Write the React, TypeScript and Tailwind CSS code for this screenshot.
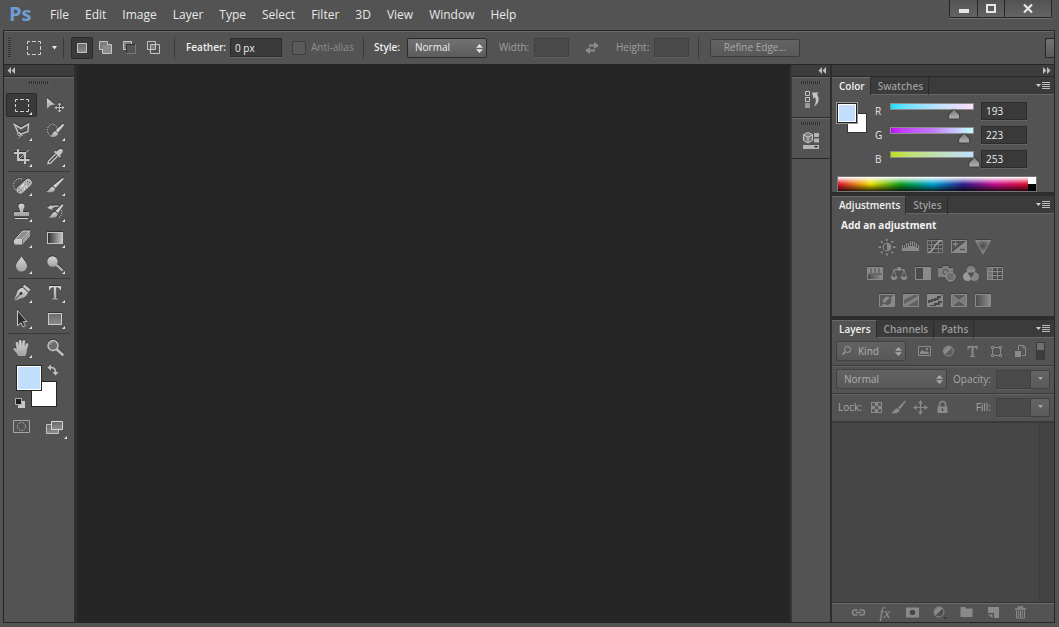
import { ReactNode, useState } from "react";
import clsx from "clsx";

const LIGHT = "#c4c4c4";

interface GlyphProps {
  w?: number;
  h?: number;
  className?: string;
  children: ReactNode;
}

function Glyph({ w = 20, h = 20, className, children }: GlyphProps) {
  return (
    <svg
      width={w}
      height={h}
      viewBox={`0 0 ${w} ${h}`}
      fill="none"
      aria-hidden="true"
      className={clsx("shrink-0", className)}
    >
      {children}
    </svg>
  );
}

// shared gradients, referenced by id from every icon
function Gradients() {
  return (
    <svg width="0" height="0" className="absolute" aria-hidden="true">
      <defs>
        <linearGradient id="metal" x1="0" y1="0" x2="0" y2="1">
          <stop offset="0" stopColor="#d6d6d6" />
          <stop offset="1" stopColor="#a2a2a2" />
        </linearGradient>
        <linearGradient id="dim" x1="0" y1="0" x2="0" y2="1">
          <stop offset="0" stopColor="#747474" />
          <stop offset="1" stopColor="#9a9a9a" />
        </linearGradient>
        <linearGradient id="box" x1="0" y1="0" x2="0" y2="1">
          <stop offset="0" stopColor="#6a6a6a" />
          <stop offset="1" stopColor="#8c8c8c" />
        </linearGradient>
        <linearGradient id="ramp" x1="0" y1="0" x2="1" y2="0">
          <stop offset="0" stopColor="#2c2c2c" />
          <stop offset="1" stopColor="#c8c8c8" />
        </linearGradient>
        <linearGradient id="dimRamp" x1="0" y1="0" x2="1" y2="0">
          <stop offset="0" stopColor="#4a4a4a" />
          <stop offset="1" stopColor="#8f8f8f" />
        </linearGradient>
        <radialGradient id="vibrance" cx=".5" cy=".4" r=".5">
          <stop offset="0" stopColor="#4c4c4c" />
          <stop offset="1" stopColor="#848484" />
        </radialGradient>
      </defs>
    </svg>
  );
}

interface Tool {
  name: string;
  flyout?: boolean;
  icon: ReactNode;
}

const toolGroups: Tool[][] = [
  [
    {
      name: "Rectangular Marquee",
      flyout: true,
      icon: <path d="M3.5 7V4.5H6M8 4.5h4M14 4.5h2.5V7M16.5 9v3M16.5 14v2.500H14M12 16.5H8M6 16.5H3.5V14M3.5 12V9" stroke="#d2d2d2" />,
    },
    {
      name: "Move",
      icon: (
        <>
          <path d="M2 3l8 6.5-4.500.7L2 14z" fill="url(#metal)" />
          <path d="M14.5 8v9M10 12.500h9" stroke={LIGHT} />
          <path d="M14.5 7.500l2 2.300h-4zM14.5 17.500l2-2.300h-4zM9.5 12.500l2.300-2v4zM19.5 12.500l-2.300-2v4z" fill={LIGHT} />
        </>
      ),
    },
    {
      name: "Polygonal Lasso",
      flyout: true,
      icon: (
        <>
          <path d="M2.5 3.500L9 7.500l7.500-4.500-.5 7.500-7 2.500-3-1.500z" stroke={LIGHT} strokeWidth="1.500" />
          <path d="M9 13c-1.500-1.500-4-1-3.500.5s3 1 3.500-.5c0 1.500-.5 3-2.500 4M9 13l1.500 2" stroke={LIGHT} />
        </>
      ),
    },
    {
      name: "Quick Selection",
      flyout: true,
      icon: (
        <>
          <ellipse cx="7.500" cy="9" rx="5" ry="6" stroke="#dcdcdc" strokeDasharray="1.200 1.200" />
          <path d="M19.500 3.500L13 11.500l-2.500-2L17.500 3z" fill="#d0d0d0" />
          <path d="M10 10l3 2.500c-.5 3-4 4-8 3 2-.7 2.500-4.500 5-5.500z" fill="url(#metal)" />
        </>
      ),
    },
    {
      name: "Crop",
      flyout: true,
      icon: (
        <>
          <path d="M6 2v11h11.500M2 6h11v11" stroke={LIGHT} strokeWidth="2" />
          <path d="M6.500 12.500L17 2.500" stroke={LIGHT} />
        </>
      ),
    },
    {
      name: "Eyedropper",
      flyout: true,
      icon: (
        <>
          <path d="M12 4.500c1.500-2 3-3 4.500-2.500s2 2 .5 4l-2 2 1 1-1.500 1.500-5.500-5.500L10.500 3.500z" fill={LIGHT} />
          <path d="M10.500 7l-7 7-.5 2.500 2.500-.5 7-7" stroke={LIGHT} strokeWidth="1.400" />
        </>
      ),
    },
  ],
  [
    {
      name: "Spot Healing Brush",
      flyout: true,
      icon: (
        <>
          <path d="M10 3C5 1 1 6 1.500 9.500S4 15 6 15.500" stroke="#dcdcdc" strokeDasharray="1.200 1.200" />
          <rect x="3" y="6.500" width="18" height="7.500" rx="3.500" transform="rotate(-43 12 10)" fill="#b4b4b4" />
          <path d="M8.800 10.500l3-3L15.500 11l-3 3z" fill="#dedede" />
          <path d="M11.500 10.500h1M10.500 12h1M13 12h1M12.500 9h1M15 5.500h1M17 6.500h1M15.500 8h1M6.500 13h1M8.500 14.500h1M6.500 15.500h1" stroke="#555" />
        </>
      ),
    },
    {
      name: "Brush",
      flyout: true,
      icon: (
        <>
          <path d="M19 2.500L10.500 12 8 9.800 17.500 2z" fill="#d0d0d0" />
          <path d="M7.500 10.500l2.700 2.200c-.5 3.300-4 4.300-9 3 2.500-.7 3-4.200 6.300-5.200z" fill="url(#metal)" />
        </>
      ),
    },
    {
      name: "Clone Stamp",
      flyout: true,
      icon: (
        <>
          <path d="M9.500 1.500c2 0 3.200 1.300 3 3-.2 1.500-1.500 2.200-1.500 5.500h6v4H2v-4h6c0-3.300-1.300-4-1.500-5.500-.2-1.700 1-3 3-3z" fill="url(#metal)" />
          <path d="M3 16.500h13" stroke="#d6d6d6" />
        </>
      ),
    },
    {
      name: "History Brush",
      flyout: true,
      icon: (
        <>
          <path d="M2 6l4.500-3.500V4C9 3 11 3 13.500 3.500v1.500C11 4.500 9 5 7 6.500L8 8z" fill={LIGHT} />
          <path d="M18.500 3L13 11l-2.500-2L17 2.300z" fill="#d0d0d0" />
          <path d="M10 9.800l2.500 2c0 3.200-3.500 4.700-9 3.500 2.500-.7 3-4.500 6.500-5.500z" fill="url(#metal)" />
          <path d="M16.500 8c1 3 0 6.500-3.500 8" stroke="#dcdcdc" strokeDasharray="1.200 1.200" />
        </>
      ),
    },
    {
      name: "Eraser",
      flyout: true,
      icon: (
        <>
          <path d="M10.500 3h7.500L10 11.500H3z" fill="#8e8e8e" stroke="#d2d2d2" />
          <path d="M2 12h8v4.500H3.500C2 16.500 2 15 2 12z" fill="#c6c6c6" />
          <path d="M10.500 12L18 3.500v4.500L10.500 16.500z" fill="#a2a2a2" />
        </>
      ),
    },
    {
      name: "Gradient",
      flyout: true,
      icon: <rect x="2.500" y="4.500" width="15" height="11" fill="url(#ramp)" stroke={LIGHT} />,
    },
    {
      name: "Blur",
      flyout: true,
      icon: <path d="M9.500 2c1 3 5.500 6 5.500 10a5.500 5.500 0 01-11 0c0-4 4.500-7 5.500-10z" fill="url(#metal)" />,
    },
    {
      name: "Dodge",
      flyout: true,
      icon: (
        <>
          <path d="M11 10.500l6 5.500" stroke="#b8b8b8" strokeWidth="2.200" strokeLinecap="round" />
          <circle cx="7.500" cy="7.500" r="5.200" fill="url(#metal)" />
        </>
      ),
    },
  ],
  [
    {
      name: "Pen",
      flyout: true,
      icon: (
        <>
          <path d="M12.500 1.500l6 5-1.700 2.300-6-5z" fill={LIGHT} />
          <path d="M10.500 4.500l5.500 4.800c-1 3.700-3.500 5.700-7.500 6.200L3.500 17.500l-1.500-1.500L4.500 11C5 7.500 7 5.500 10.500 4.500z" fill="url(#metal)" />
          <path d="M3 16.500l5.500-5.500" stroke="#333" />
          <circle cx="9" cy="10.500" r="1.400" fill="#333" />
        </>
      ),
    },
    {
      name: "Type",
      flyout: true,
      icon: <path d="M4 3h12v4h-1c-.3-1.800-1-2.700-3.800-2.700V14c0 1 .5 1.500 2 1.500v1H6.800v-1c1.500 0 2-.5 2-1.500V4.300C6 4.300 5.300 5.200 5 7H4z" fill="url(#metal)" />,
    },
    {
      name: "Path Selection",
      flyout: true,
      icon: <path d="M5.500 1.500l9.500 11-3.700.2 2.200 4-2.500 1.200-2-4.200-3.500 3z" fill="#2e2e2e" stroke="#c8c8c8" />,
    },
    {
      name: "Rectangle",
      flyout: true,
      icon: <rect x="3.500" y="4.500" width="13" height="11" fill="url(#box)" stroke="#cacaca" />,
    },
  ],
  [
    {
      name: "Hand",
      flyout: true,
      icon: (
        <path
          d="M6.500 17.500c-1-2.500-3.500-4.500-5-6.500.5-1.500 2-1 3.500 1L4 5c0-1.300 1.500-1.500 2 0l1 4.500L7.200 3c.2-1.400 1.800-1.400 2 0l.5 6 1.300-6c.4-1.300 2-1 1.900.5L12.300 10l2-4.200c.6-1.200 2-.6 1.700.7-.7 3-1.300 4-1.700 7-.2 1.700-.8 3-1.300 4z"
          fill="url(#metal)"
          stroke="#c8c8c8"
          strokeWidth=".6"
        />
      ),
    },
    {
      name: "Zoom",
      icon: (
        <>
          <path d="M11.500 11l6 5.500" stroke="#bdbdbd" strokeWidth="2.600" strokeLinecap="round" />
          <circle cx="8" cy="7.500" r="5" fill="#6c6c6c" stroke="#c4c4c4" strokeWidth="1.500" />
          <path d="M5 7a3.500 3.500 0 013.500-3" stroke="#a8a8a8" />
        </>
      ),
    },
  ],
];

function Grip() {
  return (
    <div className="h-[3px] w-5 bg-[repeating-linear-gradient(to_right,#2b2b2b_0_1px,#5c5c5c_1px_2px)]" />
  );
}

function Flyout() {
  return (
    <span className="absolute right-1 bottom-px size-[3px] bg-[#e4e4e4] [clip-path:polygon(100%_0,100%_100%,0_100%)]" />
  );
}

function DoubleArrow({ right = false }: { right?: boolean }) {
  return (
    <Glyph w={9} h={7}>
      <path d={right ? "M1 0v7l3.500-3.500zM5 0v7l3.500-3.500z" : "M4 0v7L.5 3.500zM8 0v7L4.500 3.500z"} fill="#bdbdbd" />
    </Glyph>
  );
}

function UpDown({ className }: { className?: string }) {
  return (
    <Glyph w={7} h={9} className={className}>
      <path d="M3.500 0L7 3.700H0zM3.500 9L7 5.300H0z" fill="currentColor" />
    </Glyph>
  );
}

function CollapseBar({ children }: { children: ReactNode }) {
  return (
    <div className="flex h-3 shrink-0 items-center border-b border-[#262626] bg-[#3d3d3d] px-[3px]">
      {children}
    </div>
  );
}

const menus = ["File", "Edit", "Image", "Layer", "Type", "Select", "Filter", "3D", "View", "Window", "Help"];

function TitleBar() {
  return (
    <header className="flex h-[30px] shrink-0 items-start">
      <div className="flex h-[28px] w-[42px] items-center pl-[9px] text-[20px] font-bold text-[#6f9dd3]">Ps</div>
      <nav className="flex h-[30px] items-center">
        {menus.map((menu) => (
          <button key={menu} type="button" className="px-2 text-xs text-[#e8e8e8]">
            {menu}
          </button>
        ))}
      </nav>
      <div className="mr-[7px] ml-auto flex h-[18px] rounded-b-xs border border-t-0 border-[#262626] bg-linear-to-b from-[#535353] to-[#646464] shadow-[0_1px_0_#707070]">
        <button type="button" aria-label="Minimize" className="flex w-[27px] items-center justify-center">
          <Glyph w={10} h={16}><path d="M0 8h10v4H0z" fill="#e6e6e6" /></Glyph>
        </button>
        <button type="button" aria-label="Maximize" className="flex w-[28px] items-center justify-center border-x border-[#262626]">
          <Glyph w={10} h={16}><path d="M1 4h8v7H1z" stroke="#e6e6e6" strokeWidth="2" /></Glyph>
        </button>
        <button type="button" aria-label="Close" className="flex w-[46px] items-center justify-center">
          <Glyph w={10} h={16}><path d="M1 3.500l8 8M9 3.500l-8 8" stroke="#e6e6e6" strokeWidth="2.200" /></Glyph>
        </button>
      </div>
    </header>
  );
}

function Divider() {
  return <div className="h-[22px] w-px shrink-0 bg-[#3a3a3a]" />;
}

const selectionModes = [
  {
    name: "Add to selection",
    icon: (
      <>
        <path d="M1.500 1.500h8v8h-8z" fill="#7d7d7d" stroke={LIGHT} />
        <path d="M5 5h8v8H5z" fill="#8c8c8c" />
        <path d="M9.500 4.500h4v9h-9v-4" stroke={LIGHT} />
      </>
    ),
  },
  {
    name: "Subtract from selection",
    icon: (
      <>
        <path d="M4.500 9.500h-3v-8h8v3" fill="#7d7d7d" stroke={LIGHT} />
        <path d="M4.500 4.500h9v9h-9z" fill="#555" stroke="#7a7a7a" />
        <path d="M4.500 13V4.500H13" stroke="#2e2e2e" />
      </>
    ),
  },
  {
    name: "Intersect with selection",
    icon: (
      <>
        <path d="M1.500 1.500h8v8h-8zM4.500 4.500h9v9h-9z" stroke={LIGHT} />
        <path d="M5 5h4v4H5z" fill="#7a7a7a" />
      </>
    ),
  },
];

const emptyField = "h-[19px] min-w-0 border border-[#414141] bg-[#4a4a4a] shadow-[0_1px_0_#5e5e5e]";

function OptionsBar() {
  const [feather, setFeather] = useState("0 px");

  return (
    <div className="flex h-[34px] shrink-0 items-center border-t border-b border-t-[#6a6a6a] border-b-[#262626] pb-px pl-1 text-[10px] text-[#a0a0a0]">
      <div className="h-5 w-[3px] bg-[repeating-linear-gradient(to_bottom,#2e2e2e_0_1px,#5c5c5c_1px_2px)]" />
      <button type="button" aria-label="Tool presets" className="ml-3 flex w-[40px] items-center justify-between pl-1">
        <Glyph w={14} h={14}>
          <path d="M.5 3V.5H3M5 .5h4M11 .5h2.500V3M13.500 5v4M13.500 11v2.500H11M9 13.500H5M3 13.500H.5V11M.5 9V5" stroke="#cfcfcf" />
        </Glyph>
        <Glyph w={7} h={4} className="mr-[5px]"><path d="M1 0h5L3.500 3.500z" fill="#e6e6e6" /></Glyph>
      </button>
      <Divider />
      <button type="button" aria-label="New selection" className="ml-[7px] flex h-[22px] w-[22px] items-center justify-center rounded-xs border border-[#2b2b2b] bg-[#3a3a3a]">
        <Glyph w={12} h={12}><path d="M1.500 1.500h9v9h-9z" fill="url(#box)" stroke={LIGHT} /></Glyph>
      </button>
      {selectionModes.map((mode) => (
        <button key={mode.name} type="button" aria-label={mode.name} className="flex w-6 justify-center">
          <Glyph w={15} h={15}>{mode.icon}</Glyph>
        </button>
      ))}
      <div className="ml-[9px]"><Divider /></div>
      <label htmlFor="feather" className="ml-[11px] w-[44px] font-semibold whitespace-nowrap text-[#eee]">Feather:</label>
      <input
        id="feather"
        value={feather}
        onChange={(e) => setFeather(e.target.value)}
        className="h-[19px] w-[52px] border border-[#2c2c2c] bg-[#3a3a3a] px-1 text-[#eee] shadow-[0_1px_0_#646464]"
      />
      <label className="ml-[10px] flex w-[71px] items-center gap-[5px] whitespace-nowrap text-[#8e8e8e]">
        <input type="checkbox" disabled className="size-[14px] shrink-0 appearance-none rounded-xs border border-[#3e3e3e] bg-[#5a5a5a]" />
        Anti-alias
      </label>
      <Divider />
      <label htmlFor="style" className="ml-[10px] w-[33px] font-semibold whitespace-nowrap text-[#eee]">Style:</label>
      <div className="relative">
        <select
          id="style"
          className="h-5 w-20 appearance-none rounded-xs border border-[#2b2b2b] bg-linear-to-b from-[#727272] to-[#5c5c5c] pl-[7px] text-[#f0f0f0]"
        >
          <option>Normal</option>
          <option>Fixed Ratio</option>
          <option>Fixed Size</option>
        </select>
        <UpDown className="pointer-events-none absolute top-[6px] right-1 text-[#e4e4e4]" />
      </div>
      <label htmlFor="width" className="ml-3 w-[35px] whitespace-nowrap">Width:</label>
      <input id="width" disabled className={clsx(emptyField, "w-[35px]")} />
      <Glyph w={14} h={14} className="mx-4">
        <path d="M4 3.500h5V1l5 3.500L9 8V5.500H4zM10 8.500v2H5V13L0 9.500 5 6v2.500z" fill="#8c8c8c" />
      </Glyph>
      <label htmlFor="height" className="ml-px w-[38px] whitespace-nowrap">Height:</label>
      <input id="height" disabled className={clsx(emptyField, "w-[35px]")} />
      <div className="ml-[9px]"><Divider /></div>
      <button type="button" className="ml-[11px] h-[18px] w-[90px] rounded-xs border border-[#3c3c3c] bg-linear-to-b from-[#646464] to-[#585858] whitespace-nowrap text-[#a8a8a8]">
        Refine Edge...
      </button>
      <button type="button" aria-label="Workspace" className="ml-auto h-5 w-[9px] rounded-l-xs border border-r-0 border-[#262626] bg-linear-to-b from-[#727272] to-[#5c5c5c]" />
    </div>
  );
}

function Toolbox() {
  const [active, setActive] = useState("Rectangular Marquee");

  return (
    <aside className="flex w-[73px] shrink-0 flex-col border-r-[3px] border-[#2e2e2e]">
      <CollapseBar><DoubleArrow /></CollapseBar>
      <div className="flex h-[15px] justify-center border-t border-[#6a6a6a] pt-[3px]"><Grip /></div>
      {toolGroups.map((group, i) => (
        <div key={i}>
          {i > 0 && <div className="mx-1 my-px h-px bg-[#3a3a3a]" />}
          <div className="grid auto-rows-[26px] grid-cols-2 pr-[3px] pl-px">
            {group.map((tool) => (
              <div key={tool.name} className="flex items-center justify-center">
                <button
                  type="button"
                  aria-label={tool.name}
                  onClick={() => setActive(tool.name)}
                  className={clsx(
                    "relative flex h-6 w-[31px] items-center justify-center rounded-xs border",
                    active === tool.name ? "border-[#2b2b2b] bg-[#3a3a3a]" : "border-transparent"
                  )}
                >
                  <Glyph className="drop-shadow-[0_-1px_0_#333]">{tool.icon}</Glyph>
                  {tool.flyout && <Flyout />}
                </button>
              </div>
            ))}
          </div>
        </div>
      ))}
      {/* foreground / background colours */}
      <div className="relative h-[53px]">
        <button type="button" aria-label="Background color" className="absolute top-5 left-[27px] size-[26px] border border-[#262626] bg-white" />
        <button type="button" aria-label="Foreground color" className="absolute top-1 left-3 size-[26px] border border-[#262626] bg-[#c1dffd] shadow-[inset_0_0_0_1px_#fff]" />
        <button type="button" aria-label="Swap colors" className="absolute top-[3px] left-[43px]">
          <Glyph w={12} h={12}>
            <path d="M3 3.500c4-.5 5.500 1.500 5.500 5" stroke={LIGHT} strokeWidth="1.500" />
            <path d="M4 .5v6L.5 3.500zM5.500 8h6L8.500 11.500z" fill={LIGHT} />
          </Glyph>
        </button>
        <button type="button" aria-label="Default colors" className="absolute top-[36px] left-[10px]">
          <Glyph w={12} h={12}>
            <path d="M4 4h7v7H4z" fill="#c8c8c8" />
            <path d="M1.500 1.500h6v6h-6z" fill="#1e1e1e" stroke="#b0b0b0" />
          </Glyph>
        </button>
      </div>
      <div className="grid h-[26px] grid-cols-2 pr-[3px] pl-px">
        <button type="button" aria-label="Quick mask" className="flex items-center justify-center">
          <Glyph>
            <path d="M1.500 3.500h16v12h-16z" stroke="#a6a6a6" />
            <circle cx="9.500" cy="9.500" r="4" stroke="#c6c6c6" strokeDasharray="1.200 1.300" />
          </Glyph>
        </button>
        <button type="button" aria-label="Screen mode" className="relative flex items-center justify-center">
          <Glyph>
            <path d="M1.500 7.500h12v9h-12z" fill="url(#box)" stroke={LIGHT} />
            <path d="M6.500 4.500h11v8h-11z" fill="url(#box)" stroke="#d6d6d6" />
          </Glyph>
          <Flyout />
        </button>
      </div>
    </aside>
  );
}

function IconDock() {
  return (
    <div className="flex w-10 shrink-0 flex-col border-r-2 border-[#2e2e2e]">
      <CollapseBar><span className="ml-auto"><DoubleArrow /></span></CollapseBar>
      <div className="flex h-[41px] flex-col items-center gap-[5px] border-t border-b border-t-[#6a6a6a] border-b-[#2b2b2b] pt-[3px]">
        <Grip />
        <button type="button" aria-label="History">
          <Glyph w={18} h={20}>
            <path d="M3.500 2.500h4v4h-4zM3.500 8.500h4v4h-4z" stroke={LIGHT} />
            <path d="M3 14h5v5H3z" fill="#9a9a9a" />
            <path d="M10 3.500h6.500L15 5.500c3 4 2 9-3 12 2-4 2.500-6.500 1-9.500L11.500 10z" fill={LIGHT} />
          </Glyph>
        </button>
      </div>
      <div className="flex h-[41px] flex-col items-center gap-[5px] border-t border-b border-t-[#6a6a6a] border-b-[#2b2b2b] pt-[3px]">
        <Grip />
        <button type="button" aria-label="Properties">
          <Glyph w={18} h={20}>
            <path d="M6 2.500l4.500 2v6L6 13 1.500 10.500v-6z" fill="#7a7a7a" stroke={LIGHT} />
            <path d="M1.500 5L6 7l4.500-2M6 7v5.500" stroke={LIGHT} />
            <path d="M12 3h5v4h-5zM12 8.500h5v4h-5zM1 15h16v4H1z" fill="#b4b4b4" />
            <path d="M12 16h4l-2 2z" fill="#222" />
          </Glyph>
        </button>
      </div>
    </div>
  );
}

function PanelTabs({ tabs }: { tabs: string[] }) {
  return (
    <div className="flex h-[18px] shrink-0 items-stretch bg-[#3b3b3b] text-[10px] font-semibold">
      {tabs.map((tab, i) => (
        <button
          key={tab}
          type="button"
          className={clsx(
            "border-t border-r border-r-[#2b2b2b] pr-[5px] pl-[7px] whitespace-nowrap",
            i === 0 ? "border-t-[#6a6a6a] bg-[#535353] text-[#f0f0f0]" : "border-t-transparent text-[#9c9c9c] shadow-[inset_0_-1px_0_#666]"
          )}
        >
          {tab}
        </button>
      ))}
      <div className="flex flex-1 items-center justify-end border-b border-[#666] pr-1">
        <button type="button" aria-label={`${tabs[0]} panel menu`}>
          <Glyph w={14} h={9}>
            <path d="M0 3h5L2.500 6z" fill="#d0d0d0" />
            <path d="M6 1.500h8M6 3.500h8M6 5.500h8M6 7.500h8" stroke="#bdbdbd" />
          </Glyph>
        </button>
      </div>
    </div>
  );
}

const channels = [
  { name: "R", value: 193, track: "bg-linear-to-r from-[#00dffd] to-[#ffdffd]" },
  { name: "G", value: 223, track: "bg-linear-to-r from-[#c100fd] via-[#c178fd] to-[#c1fffd]" },
  { name: "B", value: 253, track: "bg-linear-to-r from-[#c1df00] to-[#c1dfff]" },
];

function ColorPanel() {
  const [values, setValues] = useState(channels.map((c) => c.value));
  const update = (index: number, value: number) =>
    setValues(values.map((v, i) => (i === index ? value : v)));

  return (
    <section className="flex h-[116px] flex-col border-b border-[#2b2b2b]">
      <PanelTabs tabs={["Color", "Swatches"]} />
      <div className="flex pt-1 pl-1">
        <div className="relative w-[39px]">
          <div className="absolute top-[14px] left-[11px] size-5 border border-[#333] bg-white" />
          <div className="absolute top-[3px] left-0 size-[22px] border border-[#999] bg-[#c1dffd] shadow-[inset_0_0_0_1px_#222,inset_0_0_0_2px_#fff]" />
        </div>
        <div>
          {channels.map((channel, i) => (
            <div key={channel.name} className="flex h-6 items-center text-[10px] text-[#e6e6e6]">
              <label htmlFor={`channel-${channel.name}`} className="w-[9px]">{channel.name}</label>
              <div className="relative h-5 w-24">
                <div className={clsx("mx-[6px] mt-0.5 h-[7px] border border-[#8c8c8c]", channel.track)} />
                <input
                  id={`channel-${channel.name}`}
                  type="range"
                  min={0}
                  max={255}
                  value={values[i]}
                  onChange={(e) => update(i, Number(e.target.value))}
                  className="absolute top-2 left-0 h-[10px] w-full appearance-none bg-transparent drop-shadow-[0_0_1px_#1c1c1c] [&::-webkit-slider-thumb]:h-[9px] [&::-webkit-slider-thumb]:w-[10px] [&::-webkit-slider-thumb]:appearance-none [&::-webkit-slider-thumb]:bg-linear-to-b [&::-webkit-slider-thumb]:from-[#7c7c7c] [&::-webkit-slider-thumb]:to-[#b4b4b4] [&::-webkit-slider-thumb]:[clip-path:polygon(50%_0,100%_60%,100%_100%,0_100%,0_60%)]"
                />
              </div>
              <input
                aria-label={`${channel.name} value`}
                value={values[i]}
                onChange={(e) => update(i, Number(e.target.value) || 0)}
                className="ml-px h-[18px] w-[46px] border border-[#2c2c2c] bg-[#3a3a3a] px-1 text-[#eee] shadow-[0_1px_0_#646464]"
              />
            </div>
          ))}
        </div>
      </div>
      <div className="mt-[5px] mr-[17px] ml-[5px] flex h-4 border border-[#777]">
        <div className="flex-1 bg-[linear-gradient(to_bottom,#fff,#fff0_50%,#0000_50%,#000c),linear-gradient(to_right,#e01030,#f0e000_17%,#10a020_33%,#00a8d8_50%,#302090_66%,#d01090_83%,#e01030)]" />
        <div className="w-2 bg-linear-to-b from-white from-50% to-black to-50%" />
      </div>
    </section>
  );
}

// grey level shared by the disabled panel icons
const DIM = "#8a8a8a";

const adjustments: { name: string; icon: ReactNode }[][] = [
  [
    {
      name: "Brightness/Contrast",
      icon: (
        <>
          <circle cx="9" cy="9" r="3.800" stroke={DIM} strokeWidth="1.200" />
          <path d="M9 5a4 4 0 010 8z" fill={DIM} />
          <path d="M9 .5V3M9 15v2.500M.5 9H3M15 9h2.500M3 3l1.700 1.700M13.300 13.300L15 15M3 15l1.700-1.700M13.300 4.700L15 3" stroke={DIM} strokeWidth="1.800" />
        </>
      ),
    },
    {
      name: "Levels",
      icon: <path d="M0 13V7h1v3h1V7h1v3h1V5h1v4h1V5h1v3h1V3h1v5h1V3h1v5h1V4h1v5h1V5h1v5h1V7h1v6z" fill={DIM} />,
    },
    {
      name: "Curves",
      icon: (
        <>
          <path d="M1.500 2.500h15v12h-15zM5.500 3v11M12.500 3v11M2 6.500h14M2 10.500h14" stroke="#7c7c7c" />
          <path d="M2 14.500c7 0 6-12 14-12" stroke="#ababab" strokeWidth="1.300" />
        </>
      ),
    },
    {
      name: "Exposure",
      icon: (
        <>
          <path d="M1.500 2.500h15v12h-15z" stroke={DIM} />
          <path d="M16.500 2.500v12h-15z" fill={DIM} />
          <path d="M3 6h5M5.500 3.500v5" stroke={DIM} strokeWidth="1.300" />
          <path d="M10 11.500h5" stroke="#505050" strokeWidth="1.300" />
        </>
      ),
    },
    { name: "Vibrance", icon: <path d="M1.500 2.500h15L9 16z" fill="url(#vibrance)" stroke={DIM} /> },
  ],
  [
    {
      name: "Hue/Saturation",
      icon: (
        <>
          <path d="M1.500 2.500h15v12h-15z" stroke={DIM} />
          <path d="M2 3h2v5H2zM6 3h2v5H6zM10 3h2v5h-2zM14 3h2v5h-2z" fill={DIM} />
          <path d="M4 3h2v5H4zM8 3h2v5H8zM12 3h2v5h-2z" fill="#6c6c6c" />
          <path d="M2 10h14v4H2z" fill="url(#dimRamp)" />
          <path d="M2 9h14" stroke={DIM} />
        </>
      ),
    },
    {
      name: "Color Balance",
      icon: (
        <>
          <path d="M9 2v4M3.500 4.500h11" stroke={DIM} strokeWidth="1.600" />
          <circle cx="9" cy="3.500" r="2" fill={DIM} />
          <path d="M4 5l-2.500 7M4 5l2.500 7M14 5l-2.500 7M14 5l2.500 7" stroke={DIM} />
          <path d="M.5 11.500h7c-.5 5-6.500 5-7 0zM10.500 11.500h7c-.5 5-6.500 5-7 0z" fill={DIM} />
        </>
      ),
    },
    {
      name: "Black & White",
      icon: (
        <>
          <path d="M1.500 2.500h15v12h-15z" fill="#4a4a4a" stroke={DIM} />
          <path d="M9 3h7v11H9z" fill={DIM} />
        </>
      ),
    },
    {
      name: "Photo Filter",
      icon: (
        <>
          <path d="M0 3h4l1-2h5l1 2h4v4a5 5 0 00-7 5H0z" fill="#808080" />
          <circle cx="7.500" cy="7" r="2.500" stroke="#4f4f4f" />
          <circle cx="12.500" cy="11.500" r="4.500" fill="#707070" stroke="#a0a0a0" />
        </>
      ),
    },
    {
      name: "Channel Mixer",
      icon: (
        <>
          <circle cx="9" cy="5" r="4.500" fill="url(#dim)" />
          <circle cx="5.500" cy="11.500" r="4.500" fill="#9a9a9a" />
          <circle cx="12.500" cy="11.500" r="4.500" fill="#868686" />
          <path d="M5.500 7.500h7L9 13z" fill="#4e4e4e" />
        </>
      ),
    },
    {
      name: "Color Lookup",
      icon: (
        <>
          <path d="M2 3h4v11H2z" fill="#727272" />
          <path d="M1.500 2.500h15v12h-15zM6.500 3v11M11.500 3v11M2 6.500h14M2 10.500h14" stroke={DIM} />
        </>
      ),
    },
  ],
  [
    {
      name: "Invert",
      icon: (
        <>
          <path d="M1.500 2.500h15v12h-15z" fill="#5c5c5c" stroke={DIM} />
          <path d="M16 3v11H3z" fill={DIM} />
          <circle cx="9" cy="8.500" r="4" fill="#454545" />
          <path d="M6.200 11.400L12 5.600a4 4 0 01-5.800 5.800z" fill="#5c5c5c" />
          <path d="M6.200 11.400a4 4 0 015.600-5.700z" fill={DIM} />
        </>
      ),
    },
    {
      name: "Posterize",
      icon: (
        <>
          <path d="M1.500 2.500h15v12h-15z" fill="#606060" stroke={DIM} />
          <path d="M2 3h10L2 8zM2 12l14-8v4L5 14H2z" fill="#828282" />
        </>
      ),
    },
    {
      name: "Threshold",
      icon: (
        <>
          <path d="M1.500 2.500h15v12h-15z" fill={DIM} stroke={DIM} />
          <path d="M2 8h3V7h3V6h3V4h5V3h-1v3h-2v2h-3v1H7v1H4v1H2zM4 13h4v-2h4V9h4v2h-2v2h-4v1H4z" fill="#484848" />
        </>
      ),
    },
    {
      name: "Selective Color",
      icon: (
        <>
          <path d="M1.500 2.500h15v12h-15z" fill="#5a5a5a" stroke={DIM} />
          <path d="M2 3l7 5.500L2 14zM16 3L9 8.500l7 5.500z" fill="#7a7a7a" />
          <path d="M2 3l14 11M16 3L2 14" stroke={DIM} />
        </>
      ),
    },
    {
      name: "Gradient Map",
      icon: <path d="M1.500 2.500h15v12h-15z" fill="url(#dimRamp)" stroke={DIM} />,
    },
  ],
];

function AdjustmentsPanel() {
  return (
    <section className="flex h-[121px] flex-col border-b border-[#2b2b2b]">
      <PanelTabs tabs={["Adjustments", "Styles"]} />
      <h2 className="mt-[3px] h-4 pl-[9px] text-[10px] leading-4 font-bold text-[#f2f2f2]">Add an adjustment</h2>
      {adjustments.map((row, i) => (
        <div key={i} className="flex h-[27px] items-center justify-center gap-1.5 pr-4">
          {row.map((item) => (
            <button key={item.name} type="button" aria-label={item.name}>
              <Glyph w={18} h={18} className="drop-shadow-[0_-1px_0_#3f3f3f]">{item.icon}</Glyph>
            </button>
          ))}
        </div>
      ))}
    </section>
  );
}

const filters = [
  {
    name: "Filter pixel layers",
    icon: (
      <>
        <path d="M1.500 2.500h12v9h-12z" stroke={DIM} />
        <path d="M3 10V8l2.500-2L8 8l2-1 2 2v1zM9 4h2v2H9z" fill={DIM} />
      </>
    ),
  },
  {
    name: "Filter adjustment layers",
    icon: (
      <>
        <circle cx="7.500" cy="7" r="5" fill="#5e5e5e" stroke={DIM} />
        <path d="M4 10.500A5 5 0 0111 3.500z" fill={DIM} />
      </>
    ),
  },
  {
    name: "Filter type layers",
    icon: <path d="M2.500 2h10v3.500h-1c-.2-1.500-.8-2-3-2V11c0 .8.500 1 1.500 1v1H5v-1c1 0 1.500-.2 1.500-1V3.500c-2.200 0-2.800.5-3 2h-1z" fill={DIM} />,
  },
  {
    name: "Filter shape layers",
    icon: (
      <>
        <path d="M3.500 4.500v6M11.500 4.500v6M5 3.500h5M5 11.500h5" stroke={DIM} />
        <path d="M2.500 2.500h2v2h-2zM10.500 2.500h2v2h-2zM2.500 10.500h2v2h-2zM10.500 10.500h2v2h-2z" stroke={DIM} />
      </>
    ),
  },
  {
    name: "Filter smart objects",
    icon: (
      <>
        <path d="M5.500 6V1.500h5l2 2v8H9" stroke={DIM} />
        <path d="M10 1v3h3" stroke={DIM} />
        <path d="M2 7h6v6H2z" fill={DIM} />
      </>
    ),
  },
];

const locks = [
  {
    name: "Lock transparent pixels",
    icon: (
      <>
        <path d="M2 2h11v11H2z" fill="#8a8a8a" />
        <path d="M3 3h3v3H3zM9 3h3v3H9zM6 6h3v3H6zM3 9h3v3H3zM9 9h3v3H9z" fill="#5a5a5a" />
      </>
    ),
  },
  {
    name: "Lock image pixels",
    icon: <path d="M15 1.500L9 9.300 7 7.500 14 .5zM6.500 8.200L8.500 10c-.5 3.200-4 4.200-8.500 3 2.500-.7 3-4.200 6.500-4.800z" fill={DIM} />,
  },
  {
    name: "Lock position",
    icon: (
      <>
        <path d="M7.500 2v11M2 7.500h11" stroke={DIM} strokeWidth="1.200" />
        <path d="M7.500 0L10 3.500H5zM7.500 15L10 11.500H5zM0 7.500L3.500 5v5zM15 7.500L11.500 5v5z" fill={DIM} />
      </>
    ),
  },
  {
    name: "Lock all",
    icon: (
      <>
        <path d="M4.500 7V4.500a3 3 0 016 0V7" stroke={DIM} strokeWidth="1.500" />
        <path d="M2.500 6.500h10V13h-10z" fill={DIM} />
        <path d="M7.500 8.500V11" stroke="#444" strokeWidth="1.500" />
      </>
    ),
  },
];

const layerActions = [
  {
    name: "Link layers",
    icon: <path d="M6.500 5H4a2.500 2.500 0 000 5h2.500M8.500 5H11a2.500 2.500 0 010 5H8.500M5 7.500h5" stroke={DIM} strokeWidth="1.500" />,
  },
  { name: "Layer style", icon: null },
  {
    name: "Add layer mask",
    icon: (
      <>
        <path d="M1 2.500h13v10H1z" fill={DIM} />
        <circle cx="7.500" cy="7.500" r="2.800" fill="#484848" />
      </>
    ),
  },
  {
    name: "New adjustment layer",
    icon: (
      <>
        <circle cx="7" cy="7" r="5" fill="#505050" stroke={DIM} />
        <path d="M3.500 10.500a5 5 0 017-7z" fill={DIM} />
        <path d="M12 12h3l-1.500 2z" fill="#333" />
      </>
    ),
  },
  { name: "New group", icon: <path d="M1.500 3c0-.6.3-1 1-1h3.500l1 1.500h6.500V12h-12z" fill={DIM} /> },
  {
    name: "New layer",
    icon: <path d="M2 2h11v11H8V8H2zM2 9.500h4.500V13z" fill={DIM} />,
  },
  {
    name: "Delete layer",
    icon: (
      <>
        <path d="M2 4h11M5.500 3.500V2h4v1.500" stroke={DIM} strokeWidth="1.300" />
        <path d="M3.500 5.500v7.500h8V5.500M5.700 5.500V12M7.500 5.500V12M9.300 5.500V12" stroke={DIM} />
      </>
    ),
  },
];

function PercentField({ id }: { id: string }) {
  return (
    <div className="flex w-[54px] shrink-0">
      <input id={id} disabled className={clsx(emptyField, "flex-1")} />
      <button type="button" aria-label={`${id} slider`} className="flex h-[19px] w-[19px] items-center justify-center rounded-r-xs border border-l-0 border-[#414141] bg-linear-to-b from-[#646464] to-[#5a5a5a]">
        <Glyph w={5} h={4}><path d="M0 0h5L2.500 3z" fill="#a8a8a8" /></Glyph>
      </button>
    </div>
  );
}

const dimSelect = "h-5 w-full appearance-none rounded-xs border border-[#404040] bg-linear-to-b from-[#626262] to-[#585858] text-[#b0b0b0]";
const layerRow = "flex h-7 shrink-0 items-center border-b border-[#3a3a3a] px-1 pb-px shadow-[0_1px_0_#626262]";

function LayersPanel() {
  return (
    <section className="flex min-h-0 flex-1 flex-col text-[10px] text-[#a8a8a8]">
      <PanelTabs tabs={["Layers", "Channels", "Paths"]} />
      <div className={layerRow}>
        <div className="relative w-[70px]">
          <select aria-label="Filter kind" className={clsx(dimSelect, "pl-[21px]")}>
            <option>Kind</option>
            <option>Name</option>
            <option>Effect</option>
          </select>
          <Glyph w={11} h={11} className="pointer-events-none absolute top-1 left-[5px]">
            <circle cx="6.500" cy="4.500" r="3" stroke="#a0a0a0" />
            <path d="M4 7L1.500 9.500" stroke="#a0a0a0" strokeWidth="1.500" />
          </Glyph>
          <UpDown className="pointer-events-none absolute top-[6px] right-1 text-[#a8a8a8]" />
        </div>
        <div className="ml-[6px] flex">
          {filters.map((filter) => (
            <button key={filter.name} type="button" aria-label={filter.name} className="flex w-6 justify-center">
              <Glyph w={15} h={15}>{filter.icon}</Glyph>
            </button>
          ))}
        </div>
        <button type="button" aria-label="Toggle filtering" className="mr-[5px] ml-auto h-[18px] w-[9px] border border-[#3a3a3a] bg-linear-to-b from-[#707070] from-45% to-[#3e3e3e] to-45%" />
      </div>
      <div className={layerRow}>
        <div className="relative w-[111px]">
          <select aria-label="Blend mode" className={clsx(dimSelect, "pl-[7px]")}>
            <option>Normal</option>
            <option>Multiply</option>
            <option>Screen</option>
          </select>
          <UpDown className="pointer-events-none absolute top-[6px] right-1 text-[#a8a8a8]" />
        </div>
        <label htmlFor="opacity" className="mr-[5px] ml-auto">Opacity:</label>
        <PercentField id="opacity" />
      </div>
      <div className={layerRow}>
        <span className="w-[33px] pl-0.5">Lock:</span>
        <div className="flex gap-[7px]">
          {locks.map((lock) => (
            <button key={lock.name} type="button" aria-label={lock.name}>
              <Glyph w={15} h={15}>{lock.icon}</Glyph>
            </button>
          ))}
        </div>
        <label htmlFor="fill" className="mr-[5px] ml-auto">Fill:</label>
        <PercentField id="fill" />
      </div>
      <div className="flex min-h-0 flex-1 border-t border-[#3a3a3a] bg-[#464646]">
        <div className="ml-auto w-[15px] border-l border-[#3c3c3c] bg-[#424242]" />
      </div>
      <div className="flex h-5 shrink-0 items-center justify-center gap-3 border-t border-[#333] pr-2 shadow-[inset_0_1px_0_#6a6a6a]">
        {layerActions.map((action) => (
          <button key={action.name} type="button" aria-label={action.name} className="flex w-[15px] justify-center">
            {action.icon ? (
              <Glyph w={15} h={15}>{action.icon}</Glyph>
            ) : (
              <span className="font-['Liberation_Serif',serif] text-[15px] leading-4 text-[#929292] italic">fx</span>
            )}
          </button>
        ))}
      </div>
    </section>
  );
}

export default function App() {
  return (
    <div className="flex h-screen flex-col overflow-hidden bg-[#535353] pb-1 font-['Open_Sans','Noto_Sans',sans-serif]">
      <Gradients />
      <TitleBar />
      <div className="mr-1 ml-[3px] flex min-h-0 flex-1 flex-col border border-[#262626]">
        <OptionsBar />
        <div className="flex min-h-0 flex-1">
          <Toolbox />
          <main className="min-w-0 flex-1 border-r-2 border-[#363636] bg-[#262626]" />
          <IconDock />
          <div className="flex w-[222px] shrink-0 flex-col">
            <CollapseBar><span className="ml-auto"><DoubleArrow right /></span></CollapseBar>
            <div className="flex min-h-0 flex-1 flex-col gap-[3px] bg-[#2e2e2e] *:bg-[#535353]">
              <ColorPanel />
              <AdjustmentsPanel />
              <LayersPanel />
            </div>
          </div>
        </div>
      </div>
    </div>
  );
}
